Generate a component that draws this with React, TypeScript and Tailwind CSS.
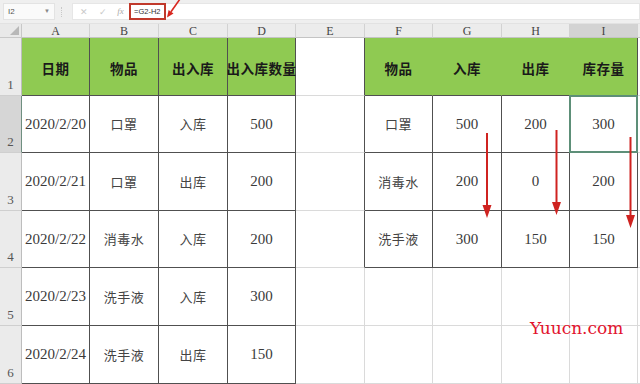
import React from "react";

const colW = [22, 68, 69, 69, 68, 69, 68, 69, 68, 68, 40];
const rowH = [58, 57, 58, 57, 58, 58];
const letters = ["A", "B", "C", "D", "E", "F", "G", "H", "I", "J"];

const data: Record<string, string> = {
  "1-1": "日期", "1-2": "物品", "1-3": "出入库", "1-4": "出入库数量",
  "2-1": "2020/2/20", "2-2": "口罩", "2-3": "入库", "2-4": "500",
  "3-1": "2020/2/21", "3-2": "口罩", "3-3": "出库", "3-4": "200",
  "4-1": "2020/2/22", "4-2": "消毒水", "4-3": "入库", "4-4": "200",
  "5-1": "2020/2/23", "5-2": "洗手液", "5-3": "入库", "5-4": "300",
  "6-1": "2020/2/24", "6-2": "洗手液", "6-3": "出库", "6-4": "150",
  "1-6": "物品", "1-7": "入库", "1-8": "出库", "1-9": "库存量",
  "2-6": "口罩", "2-7": "500", "2-8": "200", "2-9": "300",
  "3-6": "消毒水", "3-7": "200", "3-8": "0", "3-9": "200",
  "4-6": "洗手液", "4-7": "300", "4-8": "150", "4-9": "150",
};

function inT1(r: number, c: number) {
  return r >= 1 && r <= 6 && c >= 1 && c <= 4;
}
function inT2(r: number, c: number) {
  return r >= 1 && r <= 4 && c >= 6 && c <= 9;
}
function inT(r: number, c: number) {
  return inT1(r, c) || inT2(r, c);
}

const serif = { fontFamily: '"Liberation Serif", "Noto Sans CJK SC", serif' };
const cjk = { fontFamily: '"Noto Sans CJK SC", "Noto Sans", sans-serif' };

function Cell({ r, c }: { r: number; c: number }) {
  const text = data[`${r}-${c}`];
  const isHeader = r === 1 && inT(r, c);
  const rightDark = inT(r, c) || inT(r, c + 1);
  const bottomDark = inT(r, c) || inT(r + 1, c);
  const greenInner = r === 1 && c >= 6 && c <= 8;
  const rightCls = greenInner
    ? "border-r-[#8fca52]"
    : rightDark
    ? "border-r-[#505050]"
    : "border-r-[#dadada]";
  const bottomCls = bottomDark ? "border-b-[#505050]" : "border-b-[#dadada]";
  const bg = isHeader ? "bg-[#8fca52]" : "bg-white";
  const isNum = text !== undefined && /^[0-9/]+$/.test(text);
  const selected = r === 2 && c === 9;
  return (
    <div
      className={`relative flex items-center justify-center border-r border-b overflow-visible whitespace-nowrap ${rightCls} ${bottomCls} ${bg}`}
    >
      {text !== undefined &&
        (isHeader ? (
          <span
            className="text-[13.5px] font-bold text-[#1a1a1a] tracking-[0.5px] pt-[4px]"
            style={cjk}
          >
            {text}
          </span>
        ) : isNum ? (
          <span className="text-[15px] text-[#3a3a3a]" style={serif}>
            {text}
          </span>
        ) : (
          <span className="text-[13px] text-[#444] tracking-[0.5px]" style={cjk}>
            {text}
          </span>
        ))}
      {selected && (
        <div className="absolute left-[-1px] top-[-1px] right-[-1px] bottom-[-1px] border-2 border-[#5d8f78]" />
      )}
    </div>
  );
}

export default function App() {
  const gridCols = colW.map((w) => `${w}px`).join(" ");
  const rows = [1, 2, 3, 4, 5, 6];
  const cols = [1, 2, 3, 4, 5, 6, 7, 8, 9, 10];
  return (
    <div className="relative w-[640px] h-[384px] overflow-hidden bg-white">
      {/* toolbar */}
      <div className="h-[24px] bg-[#efefef] flex items-start pt-[3px] border-b border-[#e2e2e2]">
        <div className="ml-[3px] w-[52px] h-[17px] bg-[#fafafa] border border-[#e3e3e3] flex items-center justify-between px-[4px]">
          <span className="text-[8px] text-[#555]" style={{ fontFamily: '"Liberation Sans", sans-serif' }}>
            I2
          </span>
          <span className="text-[6px] text-[#888]">▼</span>
        </div>
        <div className="ml-[6px] mt-[4px] w-[1px] h-[10px] border-l border-dotted border-[#c8c8c8]" />
        <div className="ml-[10px] flex-1 h-[17px] bg-white border border-[#e6e6e6] flex items-center">
          <div className="w-[56px] flex items-center justify-around text-[#c9c9c9] text-[9px] pl-[2px]">
            <span>✕</span>
            <span>✓</span>
            <span className="italic text-[#aaa]" style={serif}>
              fx
            </span>
          </div>
          <div className="h-[17px] w-[37px] border-2 border-[#c0392b] flex items-center pl-[3px]">
            <span className="text-[7.5px] text-[#333]" style={{ fontFamily: '"Liberation Sans", sans-serif' }}>
              =G2-H2
            </span>
          </div>
        </div>
      </div>

      {/* sheet */}
      <div
        className="grid"
        style={{ gridTemplateColumns: gridCols, gridTemplateRows: `14px ${rowH.map((h) => `${h}px`).join(" ")}` }}
      >
        {/* corner */}
        <div className="relative bg-[#e9e9e9] border-r border-b border-[#c8c8c8] flex items-end justify-end pr-[2px] pb-[2px]">
          <svg width="9" height="9" viewBox="0 0 9 9">
            <polygon points="9,0 9,9 0,9" fill="#b8b8b8" />
          </svg>
        </div>
        {cols.map((c) => (
          <div
            key={`h${c}`}
            className={`flex items-center justify-center border-r border-b border-r-[#d2d2d2] border-b-[#c4c4c4] text-[12px] leading-[12px] text-[#444] pt-[1px] ${
              c === 9 ? "bg-[#d3d3d3]" : "bg-[#ececec]"
            }`}
            style={serif}
          >
            {letters[c - 1] === "J" ? "" : letters[c - 1]}
          </div>
        ))}
        {rows.map((r) => (
          <React.Fragment key={`r${r}`}>
            <div
              className={`flex items-end justify-center pb-[1px] border-b border-r border-b-[#cfcfcf] text-[13px] text-[#555] ${
                r === 2 ? "bg-[#d6d6d6] border-r-[#6f8f80]" : "bg-[#ebebeb] border-r-[#bdbdbd]"
              }`}
              style={serif}
            >
              {r}
            </div>
            {cols.map((c) => (
              <Cell key={`${r}-${c}`} r={r} c={c} />
            ))}
          </React.Fragment>
        ))}
      </div>

      {/* red arrows overlay */}
      <svg className="absolute left-0 top-0 pointer-events-none" width="640" height="384">
        <line x1="180" y1="-1" x2="171" y2="11.8" stroke="#d8261f" strokeWidth="1.6" />
        <polygon points="167,17.5 173.5,13.5 168.6,10.1" fill="#d8261f" />

        <line x1="487" y1="133" x2="487" y2="208" stroke="#cf2320" strokeWidth="2" />
        <polygon points="482.5,205 491.5,205 487,218" fill="#cf2320" />

        <line x1="556.5" y1="130" x2="556.5" y2="205" stroke="#cf2320" strokeWidth="2" />
        <polygon points="552,202 561,202 556.5,215" fill="#cf2320" />

        <line x1="630.5" y1="137" x2="630.5" y2="218" stroke="#cf2320" strokeWidth="2" />
        <polygon points="626,215 635,215 630.5,228" fill="#cf2320" />
      </svg>

      {/* watermark */}
      <div
        className="absolute left-[530px] top-[318px] text-[17px] leading-[20px] text-[#e2132d] pointer-events-none"
        style={{ fontFamily: '"DejaVu Serif", serif' }}
      >
        Yuucn.com
      </div>
    </div>
  );
}
